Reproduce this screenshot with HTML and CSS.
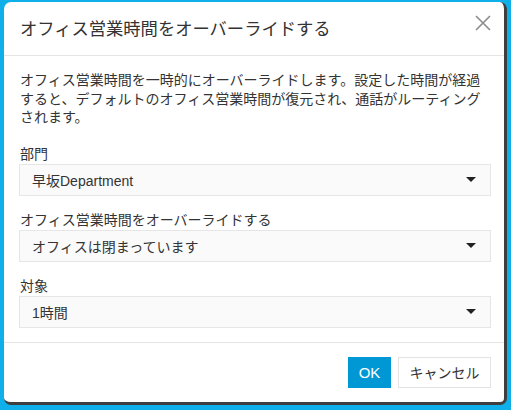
FILE: index.html
```html
<!DOCTYPE html>
<html lang="ja">
<head>
<meta charset="utf-8">
<link rel="stylesheet" href="styles.css">
</head>
<body>
<div class="dialog">
  <div class="header">
    <h1 class="title">オフィス営業時間をオーバーライドする</h1>
    <span class="close" aria-label="閉じる">
      <svg width="16" height="16" viewBox="0 0 16 16"><path d="M1 1L15 15M15 1L1 15" stroke="#8c8c8c" stroke-width="1.6" fill="none"/></svg>
    </span>
  </div>
  <div class="body">
    <p class="desc">オフィス営業時間を一時的にオーバーライドします。設定した時間が経過すると、デフォルトのオフィス営業時間が復元され、通話がルーティングされます。</p>
    <div class="field">
      <div class="label">部門</div>
      <div class="select"><span>早坂Department</span><i class="caret"></i></div>
    </div>
    <div class="field">
      <div class="label">オフィス営業時間をオーバーライドする</div>
      <div class="select"><span>オフィスは閉まっています</span><i class="caret"></i></div>
    </div>
    <div class="field last">
      <div class="label">対象</div>
      <div class="select"><span>1時間</span><i class="caret"></i></div>
    </div>
  </div>
  <div class="footer">
    <button class="btn primary">OK</button>
    <button class="btn cancel">キャンセル</button>
  </div>
</div>
</body>
</html>
```
FILE: styles.css
```css
html, body {
  margin: 0;
  padding: 0;
}
body {
  background: #0fb0ea;
  width: 511px;
  height: 410px;
  overflow: hidden;
  font-family: "Liberation Sans", "Noto Sans CJK JP", sans-serif;
  color: #333;
  padding: 2px 4px 0 4px;
  box-sizing: border-box;
}
.dialog {
  width: 503px;
  height: 403px;
  box-sizing: border-box;
  background: #fff;
  border-style: solid;
  border-color: #3e3e3e;
  border-width: 0 3px 3px 0;
  border-radius: 7px;
  display: flex;
  flex-direction: column;
}
.header {
  height: 54px;
  box-sizing: border-box;
  border-bottom: 1px solid #e5e5e5;
  display: flex;
  align-items: center;
  justify-content: space-between;
  padding: 0 13px 2px 16px;
}
.title {
  margin: 0;
  font-size: 17.3px;
  font-weight: normal;
  color: #333;
}
.close {
  display: flex;
  margin-top: -10px;
}
.body {
  padding: 15px 13px 0 15px;
  border-bottom: 1px solid #e5e5e5;
}
.desc {
  margin: 0 0 17px 1px;
  font-size: 14px;
  line-height: 18.5px;
  color: #333;
}
.field {
  margin-bottom: 14px;
}
.label {
  font-size: 14px;
  line-height: 20px;
  padding-left: 1px;
}
.select {
  height: 32px;
  box-sizing: border-box;
  background: #fafafa;
  border: 1px solid #e6e6e6;
  display: flex;
  align-items: center;
  justify-content: space-between;
  padding: 0 14px 0 12px;
  font-size: 14px;
}
.caret {
  width: 0;
  height: 0;
  border-left: 5px solid transparent;
  border-right: 5px solid transparent;
  border-top: 5px solid #222;
}
.footer {
  display: flex;
  justify-content: flex-end;
  gap: 7px;
  padding: 14px 13px 0 15px;
}
.btn {
  height: 31px;
  font-family: inherit;
  font-size: 14px;
  color: #333;
  background: #fff;
  border: 1px solid #e3e3e3;
  padding: 0;
  margin: 0;
  border-radius: 0;
}
.btn.cancel {
  width: 93px;
}
.btn.primary {
  background: #0098d4;
  border-color: #0098d4;
  color: #fff;
  font-size: 15px;
  width: 43px;
}
```
